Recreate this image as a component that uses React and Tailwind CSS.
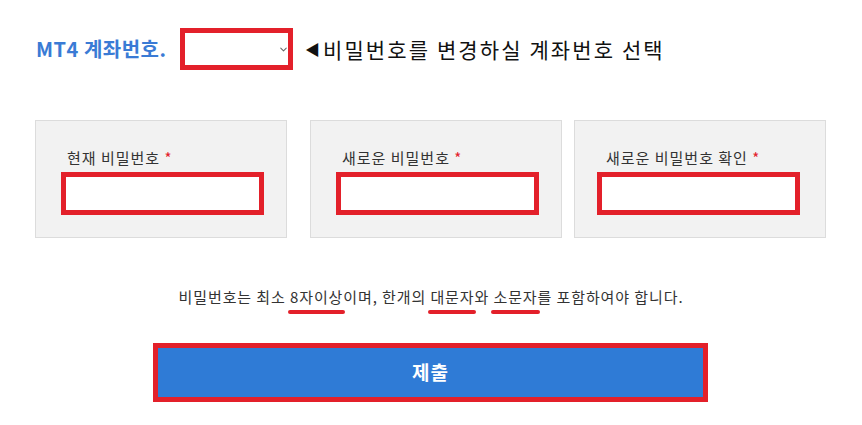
import { ChevronDown } from 'lucide-react';

const RED = 'border-[#e3202a]';

const fields = [
    { label: '현재 비밀번호', inputMl: 'ml-[25px]' },
    { label: '새로운 비밀번호', inputMl: 'ml-[25px]' },
    { label: '새로운 비밀번호 확인', inputMl: 'ml-[22px]' },
];

const Mark = ({ children }) => (
    <span className="relative">
        {children}
        <span className="absolute left-[-2px] right-[-2px] bottom-[-7px] h-[4px] rounded-full bg-[#e3202a]" />
    </span>
);

const App = () => {
    return (
        <div className="w-[862px] h-[425px] bg-white font-['Noto_Sans_CJK_KR','Noto_Sans',sans-serif] overflow-hidden">
            {/* Account select */}
            <div className="flex items-center pt-[28px] pl-[36px]">
                <div className="w-[144px] text-[20px] tracking-[0.5px] font-bold text-[#3a7bd5] leading-[42px]">MT4 계좌번호.</div>
                <div className={`relative w-[113px] h-[42px] border-[5px] ${RED} bg-white`}>
                    <select className="w-full h-full appearance-none bg-transparent outline-none" />
                    <ChevronDown size={11} strokeWidth={2.2} className="absolute right-[-1px] top-[11px] text-[#666] pointer-events-none" />
                </div>
                <div className="ml-[12px] flex items-center text-[21px] tracking-[2.1px] text-[#111] leading-[42px]">
                    <span className="text-[15px] mr-[3px] tracking-normal">◀</span>
                    비밀번호를 변경하실 계좌번호 선택
                </div>
            </div>

            {/* Password fields */}
            <div className="flex mt-[50px] pl-[35px]">
                {fields.map((f, i) => (
                    <div
                        key={f.label}
                        className={`w-[252px] h-[118px] bg-[#f2f2f2] border border-[#dcdcdc] pt-[26px] ${i === 1 ? 'ml-[23px]' : ''} ${i === 2 ? 'ml-[12px]' : ''}`}
                    >
                        <div className="pl-[31px] text-[15px] tracking-[1px] leading-[22px] text-[#333]">
                            {f.label} <span className="text-[#e3202a]">*</span>
                        </div>
                        <input
                            type="password"
                            className={`block mt-[3px] ${f.inputMl} w-[203px] h-[43px] bg-white border-[5px] ${RED} outline-none`}
                        />
                    </div>
                ))}
            </div>

            {/* Rule note */}
            <p className="mt-[48px] text-center text-[15px] tracking-[0.9px] leading-[22px] text-[#333]">
                비밀번호는 최소 <Mark>8자이상</Mark>이며, 한개의 <Mark>대문자</Mark>와 <Mark>소문자</Mark>를 포함하여야 합니다.
            </p>

            {/* Submit */}
            <button className={`block mt-[35px] ml-[153px] w-[555px] h-[59px] bg-[#2f7bd6] border-[5px] ${RED} text-white text-[19px] tracking-[1px] font-bold`}>
                제출
            </button>
        </div>
    );
};

export default App;
